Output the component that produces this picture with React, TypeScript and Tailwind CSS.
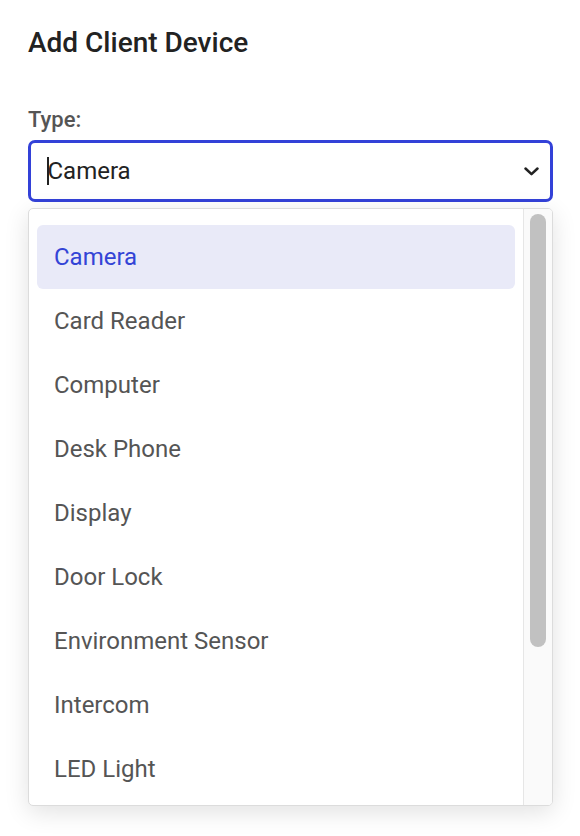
import React from "react";

const items = [
  "Camera",
  "Card Reader",
  "Computer",
  "Desk Phone",
  "Display",
  "Door Lock",
  "Environment Sensor",
  "Intercom",
  "LED Light",
];

export default function App() {
  return (
    <div
      className="w-[580px] h-[836px] bg-white overflow-hidden pl-[28px] pr-[27px]"
      style={{ fontFamily: "Roboto, 'Noto Sans', sans-serif" }}
    >
      <h1 className="pt-[25px] text-[28px] leading-[36px] font-medium text-[#222]">
        Add Client Device
      </h1>
      <div className="mt-[46px] text-[22px] leading-[26px] font-medium text-[#555]">
        Type:
      </div>
      <div className="mt-[7px] h-[62px] border-[3px] border-[#3341d8] rounded-[7px] flex items-center pl-[16px] pr-[11px] bg-white">
        <span className="w-[1.5px] h-[28px] bg-[#222] mr-[-1px]" />
        <span className="text-[24px] text-[#222] flex-1">Camera</span>
        <svg width="15" height="9" viewBox="0 0 15 9" className="mt-[1px]">
          <path d="M1.5 1.5 L7.5 7.2 L13.5 1.5" fill="none" stroke="#222" strokeWidth="2.5" strokeLinecap="round" strokeLinejoin="round" />
        </svg>
      </div>
      <div className="mt-[6px] h-[598px] border border-[#dcdcdc] rounded-[5px] bg-white flex overflow-hidden shadow-[0_6px_24px_rgba(0,0,0,0.12)]">
        <div className="flex-1 pt-[16px] px-[8px] flex flex-col">
          {items.map((it, i) => (
            <div
              key={it}
              className={
                i === 0
                  ? "h-[64px] shrink-0 flex items-center pl-[17px] rounded-[6px] bg-[#e9eaf8] text-[#3344d6] text-[24px]"
                  : "h-[64px] shrink-0 flex items-center pl-[17px] text-[#555] text-[24px]"
              }
            >
              {it}
            </div>
          ))}
        </div>
        <div className="w-[29px] border-l border-[#e6e6e6] bg-[#fafafa] pt-[5px] pl-[6px]">
          <div className="w-[16px] h-[433px] rounded-full bg-[#c1c1c1]" />
        </div>
      </div>
    </div>
  );
}
